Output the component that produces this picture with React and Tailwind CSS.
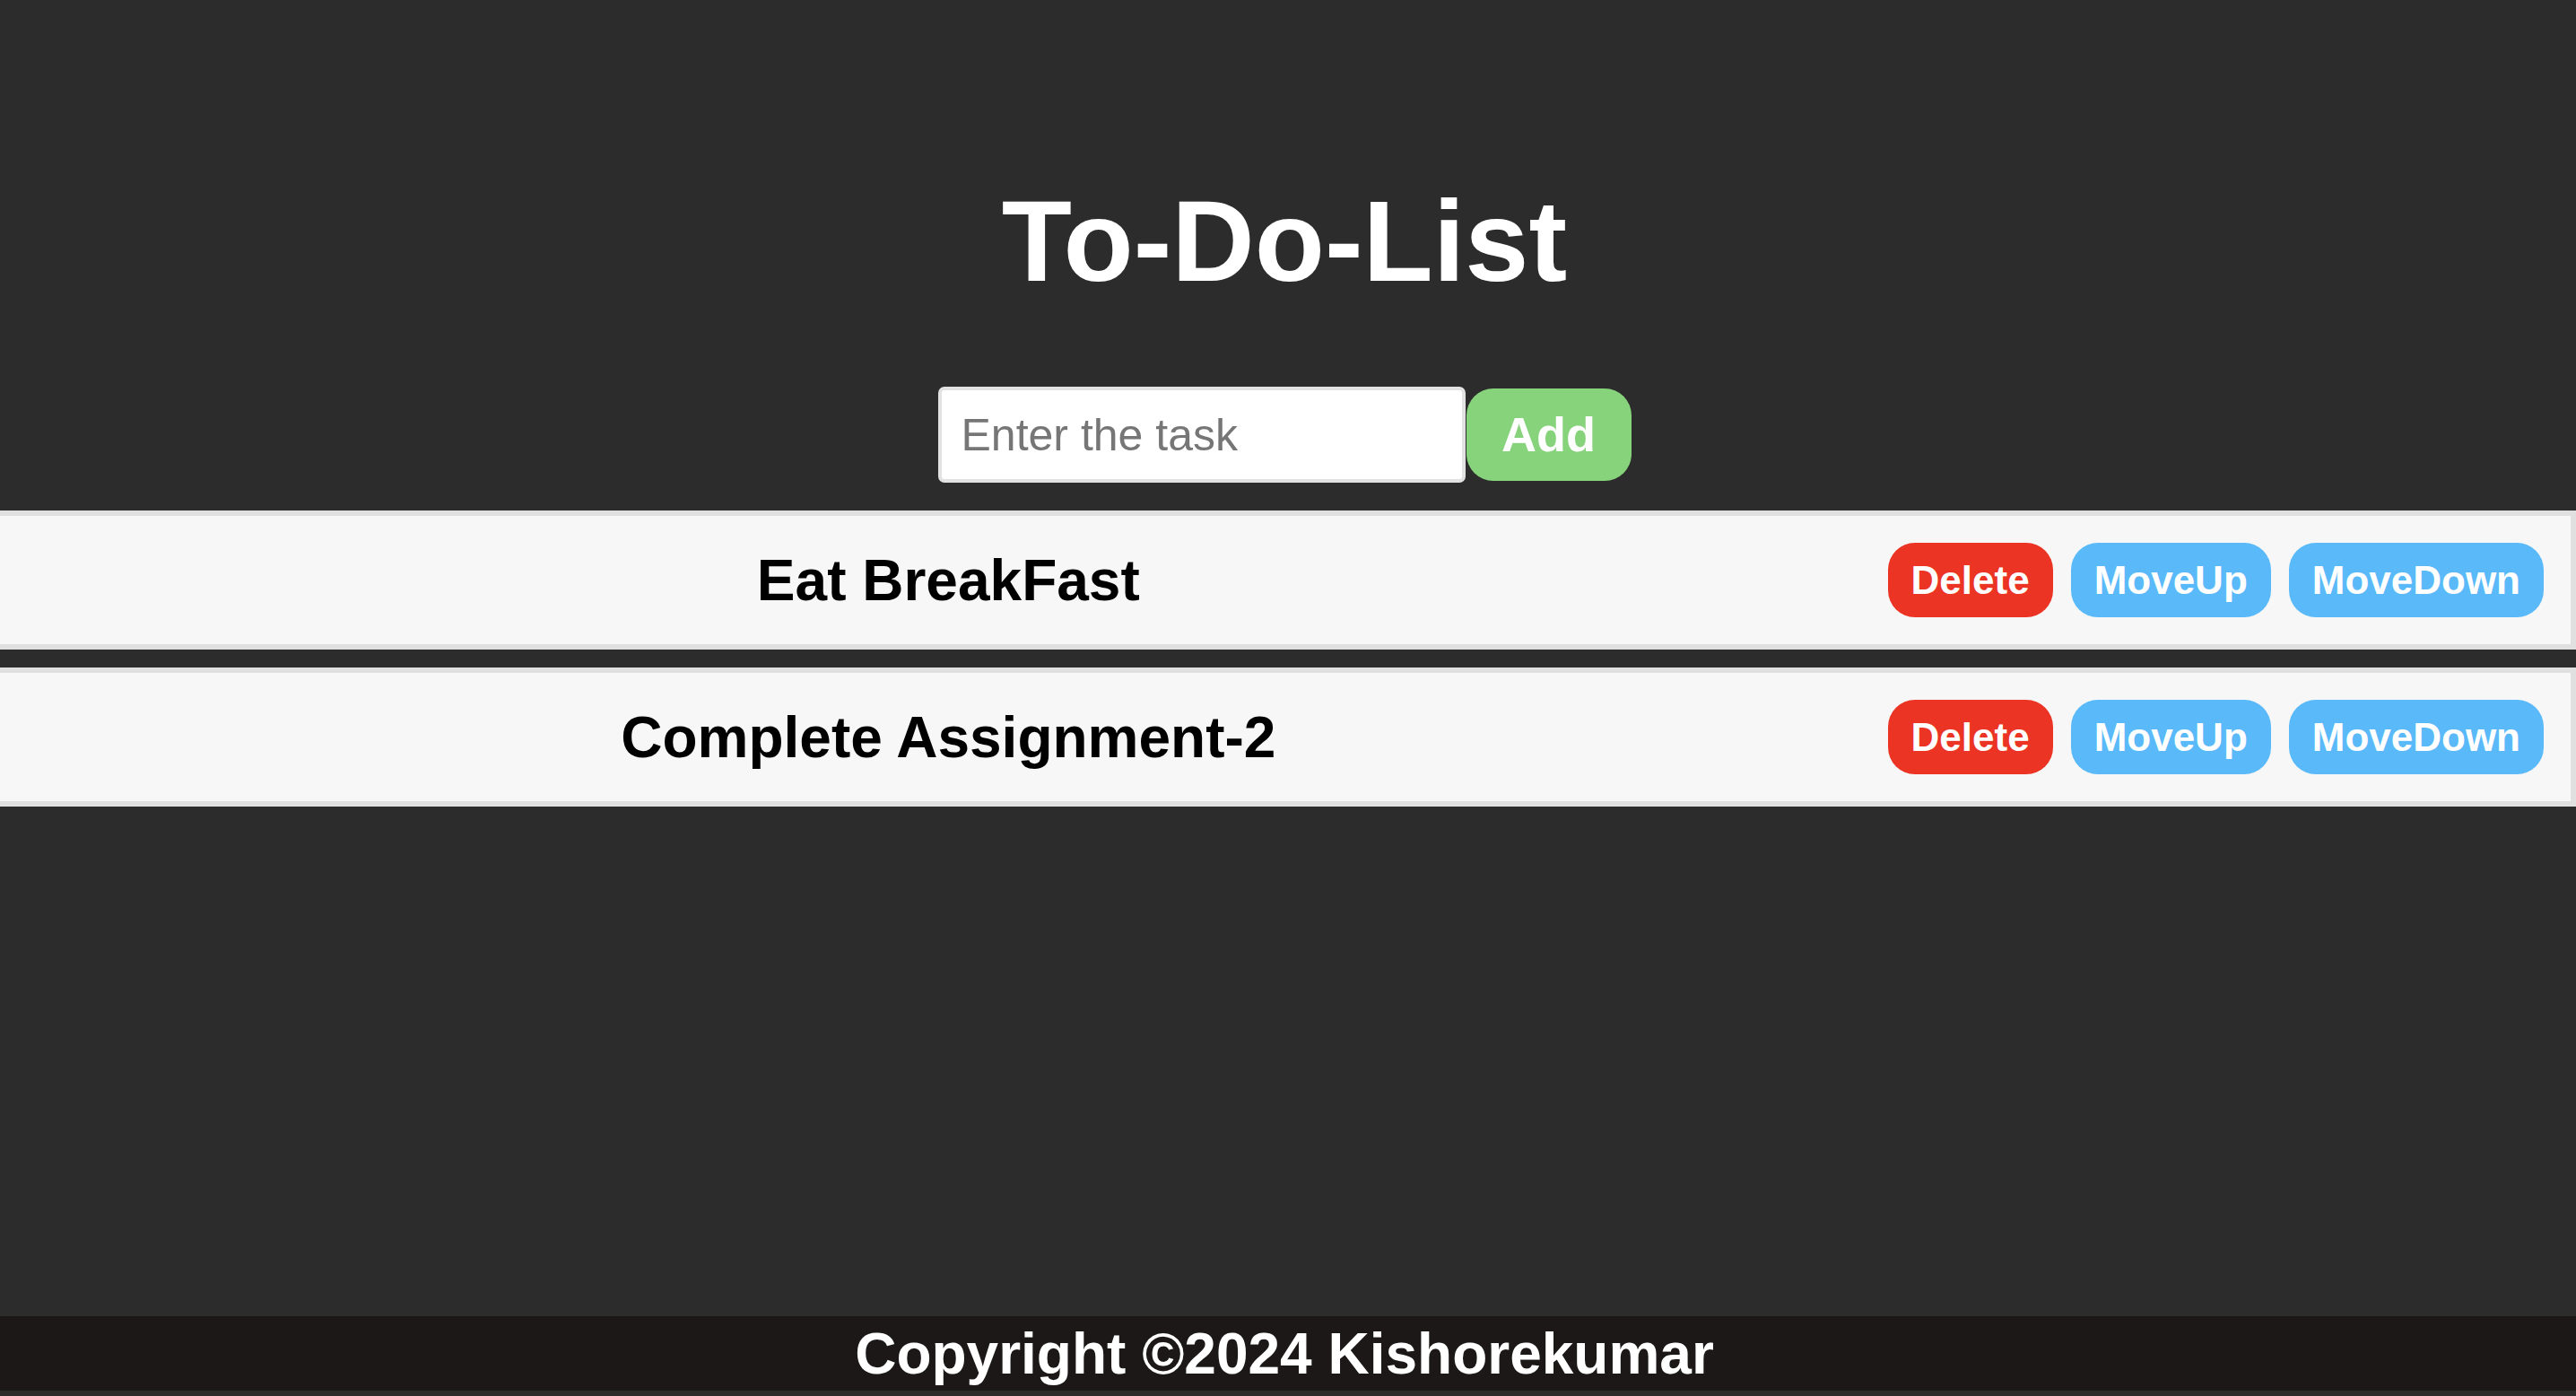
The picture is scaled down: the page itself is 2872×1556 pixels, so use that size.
import React, { useState } from 'react';

const initialTasks = ['Eat BreakFast', 'Complete Assignment-2'];

export default function App() {
  const [tasks, setTasks] = useState(initialTasks);
  const [newTask, setNewTask] = useState('');

  const addTask = () => {
    if (newTask.trim() !== '') {
      setTasks([...tasks, newTask]);
      setNewTask('');
    }
  };

  const deleteTask = (index) => {
    setTasks(tasks.filter((_, i) => i !== index));
  };

  const moveTaskUp = (index) => {
    if (index > 0) {
      const updated = [...tasks];
      [updated[index], updated[index - 1]] = [updated[index - 1], updated[index]];
      setTasks(updated);
    }
  };

  const moveTaskDown = (index) => {
    if (index < tasks.length - 1) {
      const updated = [...tasks];
      [updated[index], updated[index + 1]] = [updated[index + 1], updated[index]];
      setTasks(updated);
    }
  };

  return (
    <div className="min-h-screen bg-[#2c2c2c] flex flex-col font-['Liberation_Sans',Arial,sans-serif]">
      <div className="flex flex-col">
        <h1 className="mt-[195px] pr-[8px] text-center text-white text-[128px] font-bold leading-[normal]">
          To-Do-List
        </h1>

        <div className="mt-[89px] pr-[8px] flex items-center justify-center gap-px">
          <input
            type="text"
            placeholder="Enter the task"
            value={newTask}
            onChange={(e) => setNewTask(e.target.value)}
            className="w-[588px] h-[107px] bg-white border-4 border-[#e2e2e2] rounded-[7px] pl-[22px] text-[50px] text-black placeholder:text-[#767676] outline-none"
          />
          <button
            onClick={addTask}
            className="w-[184px] h-[103px] bg-[#87d37c] text-white text-[54px] font-bold rounded-[30px]"
          >
            Add
          </button>
        </div>

        <ol className="mt-[31px] flex flex-col gap-[20px]">
          {tasks.map((task, index) => (
            <li
              key={index}
              className="flex items-center bg-[#f7f7f7] border-y-[6px] border-r-[6px] border-[#e0e0e0] py-[30px] pl-[30px] pr-[30px] gap-[20px]"
            >
              <span className="flex-1 text-center text-black text-[64px] font-bold leading-[normal]">
                {task}
              </span>
              <button
                onClick={() => deleteTask(index)}
                className="h-[83px] px-[26px] bg-[#eb3424] text-white text-[44px] font-bold rounded-[30px]"
              >
                Delete
              </button>
              <button
                onClick={() => moveTaskUp(index)}
                className="h-[83px] px-[26px] bg-[#59b9f9] text-white text-[44px] font-bold rounded-[30px]"
              >
                MoveUp
              </button>
              <button
                onClick={() => moveTaskDown(index)}
                className="h-[83px] px-[26px] bg-[#59b9f9] text-white text-[44px] font-bold rounded-[30px]"
              >
                MoveDown
              </button>
            </li>
          ))}
        </ol>
      </div>

      <footer className="mt-auto mb-[6px] h-[83px] pr-[8px] bg-[#1b1817] flex items-center justify-center">
        <p className="text-white text-[64px] font-bold leading-[normal]">
          Copyright ©2024 Kishorekumar
        </p>
      </footer>
    </div>
  );
}
